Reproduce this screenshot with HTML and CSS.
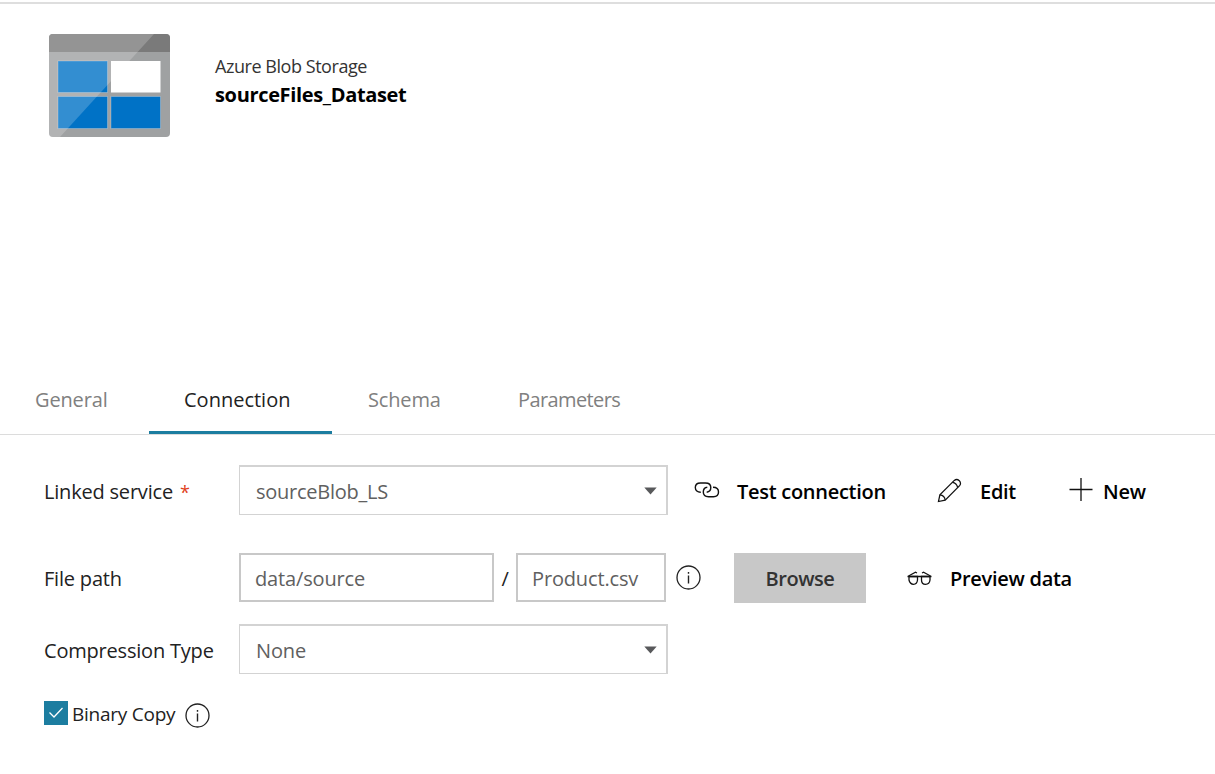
FILE: index.html
```html
<!DOCTYPE html>
<html lang="en">
<head>
<meta charset="utf-8">
<title>sourceFiles_Dataset</title>
<link rel="stylesheet" href="styles.css">
</head>
<body>
<header class="dataset-header">
  <svg class="storage-icon" width="121" height="103" viewBox="0 0 121 103">
    <defs><clipPath id="frame"><rect width="121" height="103" rx="4"/></clipPath></defs>
    <g clip-path="url(#frame)">
      <rect width="121" height="103" fill="#9fa1a2"/>
      <rect width="121" height="18" fill="#7a7a7a"/>
      <g stroke="#fff" stroke-opacity=".25">
        <rect x="9" y="27" width="49.500" height="31.500" fill="#0072c6"/>
        <rect x="9" y="62.500" width="49.500" height="32" fill="#0072c6"/>
        <rect x="62" y="62.500" width="49.500" height="32" fill="#0072c6"/>
      </g>
      <path d="M0 0H105L11 103H0Z" fill="#fff" fill-opacity=".2"/>
      <rect x="62" y="27" width="49.500" height="31.500" fill="#fff"/>
    </g>
  </svg>
  <div class="dataset-title">
    <div><span class="dataset-type">Azure Blob Storage</span></div>
    <div><span class="dataset-name">sourceFiles_Dataset</span></div>
  </div>
</header>
<nav class="tabs">
  <a class="tab tab-general"><span>General</span></a>
  <a class="tab tab-connection active"><span>Connection</span></a>
  <a class="tab tab-schema"><span>Schema</span></a>
  <a class="tab tab-parameters"><span>Parameters</span></a>
</nav>
<main class="form">
  <div class="row row-service">
    <label class="label"><span class="label-text">Linked service</span><span class="required">*</span></label>
    <div class="select"><span class="service-value">sourceBlob_LS</span><svg class="caret" width="13" height="8" viewBox="0 0 13 8"><path d="M.3.5H12.700L6.500 7.500Z" fill="#58595b"/></svg></div>
    <a class="action test"><svg width="26" height="18" viewBox="0 0 26 18"><g fill="none" stroke="#111" stroke-width="1.400"><path d="M6.800 11.200C3.500 11.300 1.300 9.500 1.300 6.600S3.500 2 6.500 2H11.500C14.800 2 16.800 4 16.800 6.600S15 11 12.700 11.200"/><path d="M19 6.200C22.500 6.200 24.500 8.300 24.500 11S22.500 15.700 19.500 15.700H14.500C11.300 15.700 9.300 13.700 9.300 11S11 6.400 13.300 6.200"/></g></svg><span>Test connection</span></a>
    <a class="action edit"><svg width="25" height="25" viewBox="0 0 26 26"><g fill="none" stroke="#111" stroke-width="1.300"><path d="M1.500 24.500L3 17.500L18 2.500Q20.500 .500 23.200 2.800Q25.500 5.500 23.500 8L8.500 23Z"/><path d="M3 17.500Q8 18 8.500 23M16 4.500Q20.500 5 21.500 10"/></g></svg><span>Edit</span></a>
    <a class="action new"><svg width="24" height="24" viewBox="0 0 24 24"><path d="M.5 11.500H23.500M12 0V23" stroke="#111" stroke-width="1.300"/></svg><span>New</span></a>
  </div>
  <div class="row row-path">
    <label class="label"><span class="label-text">File path</span></label>
    <div class="input folder"><span>data/source</span></div>
    <span class="slash">/</span>
    <div class="input file"><span>Product.csv</span></div>
    <svg class="info" width="26" height="26" viewBox="0 0 26 26"><circle cx="12.500" cy="12.500" r="11.500" fill="none" stroke="#222" stroke-width="1.300"/><path d="M12.500 10.500V18.500M12.500 7V8.800" stroke="#222" stroke-width="1.400"/></svg>
    <div class="browse"><span>Browse</span></div>
    <a class="action preview"><svg width="25" height="15" viewBox="0 0 25 15"><g fill="none" stroke="#111" stroke-width="1.300"><path d="M2 5.500H10.500V9Q10 13.300 6.500 13.300T2 9ZM14.500 5.500H23V9Q22.500 13.300 18.500 13.300T14.500 9Z"/><path d="M.5 5.500H24.500" stroke-width="1.500"/><path d="M1.500 5L8.500 1.200L10 2M23.500 5L16.500 1.200L15 2" stroke-width="1.100"/></g></svg><span>Preview data</span></a>
  </div>
  <div class="row row-compression">
    <label class="label"><span class="label-text">Compression Type</span></label>
    <div class="select"><span>None</span><svg class="caret" width="13" height="8" viewBox="0 0 13 8"><path d="M.3.5H12.700L6.500 7.500Z" fill="#58595b"/></svg></div>
  </div>
  <div class="row row-binary">
    <svg width="24" height="24" viewBox="0 0 24 24"><rect width="24" height="24" fill="#1c7da0"/><path d="M5.500 11.500L10 16L18.500 7" fill="none" stroke="#fff" stroke-width="1.300"/></svg>
    <span class="binary-text">Binary Copy</span>
    <svg class="info" width="26" height="26" viewBox="0 0 26 26"><circle cx="12.500" cy="12.500" r="11.500" fill="none" stroke="#222" stroke-width="1.300"/><path d="M12.500 10.500V18.500M12.500 7V8.800" stroke="#222" stroke-width="1.400"/></svg>
  </div>
</main>
</body>
</html>
```
FILE: styles.css
```css
* { box-sizing: border-box; }
body {
  margin: 0;
  height: 774px;
  overflow: hidden;
  background: #fff;
  color: #222;
  font: 20px/28px "Open Sans", "Noto Sans", sans-serif;
  letter-spacing: -.15px;
  border-top: 2px solid #fff;
}
span { white-space: nowrap; }
svg { display: block; flex: none; }

.dataset-header {
  display: flex;
  gap: 45px;
  height: 365px;
  padding: 30px 49px 0;
  border-top: 2px solid #dedede;
}
.dataset-title { padding-top: 18px; line-height: 28px; }
.dataset-type { font-size: 18px; color: #333; letter-spacing: -.45px; }
.dataset-name { font-weight: 700; color: #000; letter-spacing: -.34px; }
.dataset-title div + div { padding-top: 1px; }

.tabs { display: flex; height: 68px; border-bottom: 1px solid #dcdcdc; color: #808080; }
.tab { height: 67px; padding: 19px 0 0 35px; }
.tab-general { width: 149px; }
.tab-connection { width: 183px; letter-spacing: 0; }
.tab-schema { width: 150px; padding-left: 36px; }
.tab-parameters { padding-left: 36px; letter-spacing: -.6px; }
.active { color: #222; border-bottom: 3px solid #1c7da0; }

.form { padding: 30px 44px 0; }
.row { display: flex; align-items: center; height: 50px; }
.label { width: 195px; padding-top: 3px; }
.row-path .label { padding-top: 1px; }
.label-text { letter-spacing: -.2px; }
.required { color: #e04020; margin-left: 7px; font-size: 18px; }
.select {
  display: flex;
  align-items: center;
  justify-content: space-between;
  width: 429px;
  height: 50px;
  padding: 0 9px 0 16px;
  border: solid #d3d3d3;
  border-width: 2px 2px 1px 1px;
  color: #606060;
}
.select span { padding-top: 2px; }
.service-value { letter-spacing: -.25px; }
.action { display: flex; align-items: center; font-weight: 600; letter-spacing: -.28px; color: #000; }
.action span { padding-top: 3px; }
.test { margin-left: 26px; gap: 17px; }
.test span { width: 149px; }
.edit { margin-left: 51px; gap: 18px; }
.edit span { width: 37px; }
.new { margin-left: 52px; gap: 10px; }

.row-path { margin-top: 38px; }
.row-path .info { margin-bottom: 1px; }
.input { height: 49px; margin-bottom: 1px; padding: 10px 14px; border: 2px solid #c8c8c8; color: #606060; }
.folder { width: 255px; }
.file { width: 150px; }
.slash { width: 22px; text-align: center; padding-top: 2px; }
.info { margin-left: 10px; }
.browse {
  width: 132px;
  height: 50px;
  margin-left: 32px;
  padding-top: 12px;
  background: #c8c8c8;
  color: #333;
  font-weight: 600;
  letter-spacing: -.45px;
  text-align: center;
}
.preview { margin-left: 41px; gap: 18px; }
.preview span { padding-top: 1px; }

.row-compression { margin-top: 21px; }
.row-binary { margin-top: 14px; }
.row-binary .info { margin-top: 6px; margin-left: 9px; }
.binary-text { width: 104px; margin-left: 4px; padding-top: 2px; font-size: 19px; letter-spacing: -.25px; }
```
